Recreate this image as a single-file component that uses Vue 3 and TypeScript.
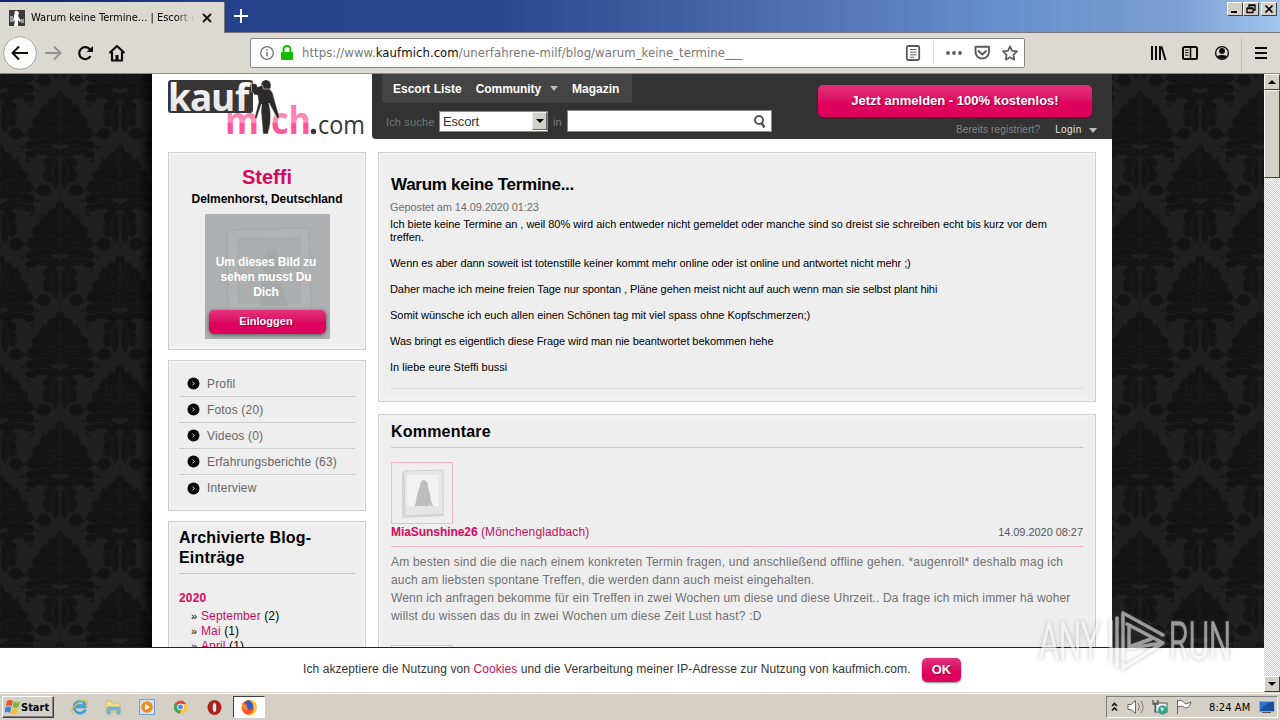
<script setup lang="ts">
interface MenuEntry {
  label: string
}

interface ArchiveEntry {
  month: string
  count: number
}

const profileMenu: MenuEntry[] = [
  { label: 'Profil' },
  { label: 'Fotos (20)' },
  { label: 'Videos (0)' },
  { label: 'Erfahrungsberichte (63)' },
  { label: 'Interview' },
]

const archive: ArchiveEntry[] = [
  { month: 'September', count: 2 },
  { month: 'Mai', count: 1 },
  { month: 'April', count: 1 },
]

const leaves: number[][] = [
  [0, 8, 5, 8], [-7, 14, 6, 7], [7, 14, 6, 7], [-13, 22, 8, 8], [13, 22, 8, 8], [0, 25, 9, 9],
  [-20, 31, 8, 7], [20, 31, 8, 7], [-9, 36, 11, 7], [9, 36, 11, 7], [-24, 42, 9, 7], [24, 42, 9, 7],
  [0, 46, 11, 8], [-14, 49, 9, 7], [14, 49, 9, 7], [-27, 54, 8, 5], [27, 54, 8, 5], [-17, 59, 12, 5],
  [17, 59, 12, 5], [-7, 62, 8, 5], [7, 62, 8, 5], [-29, 63, 6, 4], [29, 63, 6, 4],
  [-9, 72, 8, 6], [9, 72, 8, 6], [-12, 84, 5, 8], [12, 84, 5, 8], [-5, 84, 4, 14], [5, 84, 4, 14],
  [-16, 99, 7, 6], [16, 99, 7, 6],
]

const motifs: number[][] = [
  [60, 17], [60, -93], [0, 71], [120, 71], [0, -39], [120, -39],
]
</script>

<template>
  <div class="screen">
    <header class="chrome">
      <div class="titlebar">
        <div class="tab">
          <svg class="favicon" width="16" height="16" viewBox="0 0 16 16">
            <rect width="16" height="16" fill="#3a3a3a" />
            <path d="M1 6h3v6H1zM12 9h3v4h-3z" fill="#999" />
            <path d="M6 1q3-1 4 2l-1 3 3 5-1 1-2-2v6H5l1-6-2 2 1-6z" fill="#fff" />
          </svg>
          <span class="tab-title">Warum keine Termine... | Escort und</span>
          <svg class="tab-close" width="10" height="10" viewBox="0 0 10 10">
            <path d="M1 1l8 8M9 1L1 9" stroke="#111" stroke-width="1.8" />
          </svg>
        </div>
        <svg class="plus" width="14" height="14" viewBox="0 0 14 14">
          <path d="M7 0v14M0 7h14" stroke="#fff" stroke-width="1.9" />
        </svg>
        <div class="winbtns">
          <span class="wb"><svg width="14" height="12"><path d="M3 9h6" stroke="#000" stroke-width="2" /></svg></span>
          <span class="wb"><svg width="14" height="12"><path d="M5 4V2h6v5H9M5 2.5h6M3 5.5h6v4H3z M3 5h6" fill="none" stroke="#000" stroke-width="1.3" /></svg></span>
          <span class="wb last"><svg width="14" height="12"><path d="M3.500 2.500l7 7M10.500 2.500l-7 7" stroke="#000" stroke-width="1.7" /></svg></span>
        </div>
      </div>
      <div class="toolbar">
        <svg class="nav-icons" width="140" height="40" viewBox="0 33 140 40">
          <circle cx="20" cy="53" r="16.400" fill="#fbfbfa" stroke="#a7a49d" />
          <path d="M28 53H13M19 46.500L12.500 53L19 59.500" fill="none" stroke="#0c0c0d" stroke-width="2" stroke-linejoin="round" />
          <path d="M45 53h15M54 46.500L60.500 53L54 59.500" fill="none" stroke="#929090" stroke-width="2" stroke-linejoin="round" />
          <path d="M90.500 56a6 6 0 1 1-.5-6.500" fill="none" stroke="#0c0c0d" stroke-width="2.200" />
          <path d="M93 46v6h-6.500z" fill="#0c0c0d" />
          <path d="M109.500 53L117 46l7.500 7M112 52v8.500h10V52" fill="none" stroke="#0c0c0d" stroke-width="2.200" stroke-linejoin="round" />
          <path d="M115.500 55h3v5h-3z" fill="#0c0c0d" />
        </svg>
        <div class="urlbar">
          <svg width="46" height="28" viewBox="251 39 46 28">
            <circle cx="267" cy="53" r="6.300" fill="none" stroke="#737373" stroke-width="1.300" />
            <path d="M267 52v4.500M267 49.200v1.500" stroke="#737373" stroke-width="1.500" />
            <path d="M283.500 52v-2.500a3.500 3.500 0 0 1 7 0V52" fill="none" stroke="#12bc00" stroke-width="2" />
            <rect x="281" y="52" width="12" height="8" rx="1" fill="#12bc00" />
          </svg>
          <span class="url">https://www.<b>kaufmich.com</b>/unerfahrene-milf/blog/warum_keine_termine___</span>
          <svg class="url-icons" width="124" height="28" viewBox="900 39 124 28">
            <rect x="906.800" y="46" width="12.400" height="14" rx="1.500" fill="none" stroke="#5a5a5b" stroke-width="1.800" />
            <path d="M910 49.500h6.500M910 52.200h6.500M910 54.800h6.500M910 57.300h4" stroke="#5a5a5b" />
            <path d="M933.500 42v22" stroke="#d6d6d6" />
            <g fill="#5a5a5b"><circle cx="948" cy="53" r="1.900" /><circle cx="954" cy="53" r="1.900" /><circle cx="960" cy="53" r="1.900" /></g>
            <path d="M975.500 46.800h13.500v5a6.700 6.700 0 0 1-13.500 0z M978.500 51l3.800 3.500L986 51" fill="none" stroke="#5a5a5b" stroke-width="1.900" stroke-linejoin="round" stroke-linecap="round" />
            <path d="M1010 46.300l2.100 4.500 4.900.6-3.600 3.400.9 4.900-4.300-2.400-4.300 2.400.9-4.900-3.600-3.400 4.900-.6z" fill="none" stroke="#5a5a5b" stroke-width="1.700" stroke-linejoin="round" />
          </svg>
        </div>
        <svg class="tool-icons" width="130" height="40" viewBox="1146 33 130 40">
          <path d="M1152 46v14M1156 46v14M1160 46v14M1161.500 46.500l4 13.500" stroke="#0c0c0d" stroke-width="2" />
          <rect x="1183" y="47" width="14" height="12" rx="1.500" fill="none" stroke="#0c0c0d" stroke-width="2" />
          <path d="M1190.500 47v12" stroke="#0c0c0d" stroke-width="1.600" />
          <path d="M1185 50.200h3.500M1185 52.700h3.500M1185 55.200h3.500" stroke="#0c0c0d" />
          <circle cx="1222" cy="53" r="6.400" fill="none" stroke="#0c0c0d" stroke-width="1.300" />
          <circle cx="1222" cy="51" r="2.900" fill="#0c0c0d" />
          <path d="M1217 56q5-2 10 0-2 3-5 3t-5-3z" fill="#0c0c0d" />
          <path d="M1241.500 37v35" stroke="#c5c1ba" />
          <path d="M1255 48h12M1255 53h12M1255 58h12" stroke="#0c0c0d" stroke-width="2" />
        </svg>
      </div>
    </header>

    <div class="viewport">
      <svg class="damask" width="1264" height="573">
        <defs>
          <pattern id="damask" width="120" height="110" patternUnits="userSpaceOnUse">
            <rect width="120" height="110" fill="#202020" />
            <g v-for="(m, i) in motifs" :key="i" :transform="`translate(${m[0]} ${m[1]})`">
              <ellipse v-for="(l, j) in leaves" :key="j" :cx="l[0]" :cy="l[1]" :rx="l[2]" :ry="l[3]" fill="#141414" stroke="#1a1a1a" stroke-width=".8" stroke-dasharray="3 2" />
              <path d="M0 0v62M0 66v40M-4 20l4 6 4-6M-17 36q9-4 17 4 8-8 17-4M-24 48q14-4 24 6 10-10 24-6M-32 60q20-8 32 6 12-14 32-6M-3 68q-7 8-3 20 3 14-10 18M3 68q7 8 3 20-3 14 10 18" fill="none" stroke="#1c1c1c" />
              <path d="M-30 46l-4-3M30 46l4-3M-25 32l-3-4M25 32l3-4M-36 57l-3-2M36 57l3-2M-15 16l-3-3M15 16l3-3M-22 102l-3-4M22 102l3-4M-34 68l4 3M34 68l-4 3" stroke="#141414" stroke-width="2" />
            </g>
          </pattern>
          <linearGradient id="edgeL"><stop offset="0" stop-color="#000" stop-opacity="0" /><stop offset="1" stop-color="#000" stop-opacity=".65" /></linearGradient>
        </defs>
        <rect width="1264" height="573" fill="url(#damask)" />
        <rect x="138" width="14" height="573" fill="url(#edgeL)" />
      </svg>

      <div class="page">
        <div class="masthead">
          <svg class="logo" width="220" height="66" viewBox="152 74 220 66">
            <defs>
              <linearGradient id="pinkText" x1="0" y1="0" x2="0" y2="1">
                <stop offset="0" stop-color="#f06a9f" /><stop offset=".55" stop-color="#ff8fbd" /><stop offset=".6" stop-color="#ff4f96" /><stop offset="1" stop-color="#ff6aa6" />
              </linearGradient>
              <linearGradient id="silver" x1="0" y1="0" x2="0" y2="1"><stop offset="0" stop-color="#fff" /><stop offset="1" stop-color="#dedede" /></linearGradient>
            </defs>
            <rect x="168" y="80" width="85" height="33" rx="3" fill="#373536" />
            <text x="168 190 211 235" y="111" class="lg kauf" fill="url(#silver)">kauf</text>
            <text x="225" y="134" class="lg mich" textLength="34" lengthAdjust="spacingAndGlyphs" fill="url(#pinkText)">m</text>
            <text x="271" y="134" class="lg mich" textLength="40" lengthAdjust="spacingAndGlyphs" fill="url(#pinkText)">ch</text>
            <circle cx="313.500" cy="131.500" r="2.700" fill="#373536" />
            <text x="318" y="134" class="dotcom" textLength="47" lengthAdjust="spacingAndGlyphs" fill="#373536">com</text>
            <ellipse cx="266" cy="85.500" rx="4.800" ry="5.500" fill="#2c2a2b" />
            <path d="M251.500 83l5 1 1 3 5-2 1 4 6 0q4 3 4.500 9l5.500 19-2 2-8.500-16 1.500 9q1 11-2.500 22h-5l-2-22 .5-8-5 15-2-1 4-16-1-7-3 0-3-4z" fill="#2c2a2b" stroke="#fff" stroke-width=".5" />
          </svg>
          <div class="darkbar">
            <nav class="mainnav">
              <span class="n1">Escort Liste</span><span class="n2">Community</span>
              <i class="caret" /><span class="n3">Magazin</span>
            </nav>
            <div class="search">
              <span class="lbl">Ich suche</span>
              <div class="select"><span>Escort</span><i class="drop"><b /></i></div>
              <span class="lbl in">in</span>
              <div class="field">
                <svg width="14" height="16" viewBox="0 0 14 16"><circle cx="6" cy="6" r="4" fill="none" stroke="#555" stroke-width="2" /><path d="M8.500 9l3 4.500" stroke="#555" stroke-width="2.600" /></svg>
              </div>
            </div>
            <div class="signup">
              <div class="btn big">Jetzt anmelden - 100% kostenlos!</div>
              <div class="login"><span>Bereits registriert?</span><em>Login</em><i class="caret" /></div>
            </div>
          </div>
        </div>

        <div class="columns">
          <aside>
            <section class="panel profile">
              <h2>Steffi</h2>
              <p class="place">Delmenhorst, Deutschland</p>
              <div class="locked">
                <svg class="ghost" width="125" height="125" viewBox="0 0 125 125">
                  <path d="M20 18l82-6 4 100H22z" fill="#abafb0" />
                  <path d="M22 16l82-2 3 98H23z M33 25l62-1v65H34z" fill="#b0b3b4" fill-rule="evenodd" stroke="#a5a8aa" />
                  <path d="M54 92l4-36q0-21 7-21t9 8l3 30 6 16v3z" fill="#a4a8a9" />
                </svg>
                <div class="locked-content">
                  <p>Um dieses Bild zu<br>sehen musst Du<br>Dich</p>
                  <div class="btn small">Einloggen</div>
                </div>
              </div>
            </section>

            <section class="panel menu">
              <div v-for="entry in profileMenu" :key="entry.label" class="menu-row">
                <svg width="13" height="13" viewBox="0 0 13 13"><circle cx="6.500" cy="6.500" r="6" fill="#080808" /><path d="M5.500 4.800l2 1.700-2 1.700" fill="none" stroke="#ddd" /></svg>
                <span>{{ entry.label }}</span>
              </div>
            </section>

            <section class="panel archive">
              <h3>Archivierte Blog-<br>Einträge</h3>
              <div class="year">2020</div>
              <div v-for="item in archive" :key="item.month" class="month">
                <i>»</i><span>{{ item.month }}</span> ({{ item.count }})
              </div>
            </section>
          </aside>

          <main>
            <section class="panel article">
              <h1>Warum keine Termine...</h1>
              <div class="date">Gepostet am 14.09.2020 01:23</div>
              <div class="body">
                <p><span class="l1">Ich biete keine Termine an , weil 80% wird aich entweder nicht gemeldet oder manche sind so dreist sie schreiben echt bis kurz vor dem</span><br>treffen.</p>
                <p class="l2">Wenn es aber dann soweit ist totenstille keiner kommt mehr online oder ist online und antwortet nicht mehr ;)</p>
                <p class="l3">Daher mache ich meine freien Tage nur spontan , Pläne gehen meist nicht auf auch wenn man sie selbst plant hihi</p>
                <p class="l4">Somit wünsche ich euch allen einen Schönen tag mit viel spass ohne Kopfschmerzen;)</p>
                <p class="l5">Was bringt es eigentlich diese Frage wird man nie beantwortet bekommen hehe</p>
                <p class="l6">In liebe eure Steffi bussi</p>
              </div>
            </section>

            <section class="panel comments">
              <h3>Kommentare</h3>
              <div class="thumb">
                <svg width="60" height="60" viewBox="0 0 60 60">
                  <path d="M10 9l40-2 2 46-42 2z" fill="#d4d4d4" />
                  <path d="M12 8l39-1v44l-38 2z" fill="#e6e6e6" stroke="#d0d0d0" />
                  <path d="M15 12h32v31H15z" fill="#f2f2f2" />
                  <path d="M23 43l2-11q2-6 3-10 1-5 4-5 4 1 4 7l2 7 1 7 2 5h-3l-1-3v3z" fill="#bdbdbd" />
                </svg>
              </div>
              <div class="byline"><span class="who"><b>MiaSunshine26</b> <span class="city">(Mönchengladbach)</span></span><time>14.09.2020 08:27</time></div>
              <div class="comment">
                <p class="c1">Am besten sind die die nach einem konkreten Termin fragen, und anschließend offline gehen. *augenroll* deshalb mag ich</p>
                <p class="c2">auch am liebsten spontane Treffen, die werden dann auch meist eingehalten.</p>
                <p class="c3">Wenn ich anfragen bekomme für ein Treffen in zwei Wochen um diese und diese Uhrzeit.. Da frage ich mich immer hä woher</p>
                <p class="c4">willst du wissen das du in zwei Wochen um diese Zeit Lust hast? :D</p>
              </div>
              <div class="thumb next" />
            </section>
          </main>
        </div>
      </div>

      <div class="scrollbar">
        <span class="sbtn"><b class="up" /></span>
        <span class="sthumb" />
        <span class="strack" />
        <span class="sbtn"><b class="down" /></span>
      </div>

      <div class="cookies">
        <span class="ctext">Ich akzeptiere die Nutzung von <em>Cookies</em> und die Verarbeitung meiner IP-Adresse zur Nutzung von kaufmich.com.</span>
        <div class="btn ok">OK</div>
      </div>
    </div>

    <footer class="taskbar">
      <div class="start">
        <svg width="16" height="16" viewBox="0 0 16 16">
          <path d="M2 2q3-2 6 0L6.500 7.500q-3-2-6 0z" fill="#e8562a" /><path d="M9 2.500q3 2 6 0L13.500 8q-3 2-6 0z" fill="#7fb83a" />
          <path d="M.3 8.500q3-2 6 0L5 14q-3-2-5.500 0z" fill="#3f86d8" /><path d="M7.300 9q3 2 6 0L12 14.500q-3 2-6 0z" fill="#f5c02c" />
        </svg>
        <span>Start</span>
      </div>
      <svg class="apps" width="164" height="24" viewBox="68 695 164 24">
        <path d="M85.500 709.500a6 6 0 1 1 .2-4H76" fill="none" stroke="#3aa0dd" stroke-width="2.600" />
        <path d="M74 707.300h12.500" stroke="#3aa0dd" stroke-width="2" />
        <ellipse cx="79.500" cy="707" rx="9.500" ry="4" fill="none" stroke="#e7b93c" stroke-width="1.400" stroke-dasharray="26 14" stroke-dashoffset="-20" transform="rotate(-38 79.500 707)" />
        <path d="M106 701h5l1 2h8v9h-14z" fill="#f2dc85" stroke="#d1b24e" stroke-width=".7" />
        <path d="M107 714v-5q0-2 2-2h9q2 0 2 2v5h-3v-4h-7v4z" fill="#6fb8e6" stroke="#4d96c8" stroke-width=".6" />
        <rect x="139.500" y="699.500" width="15" height="15" fill="#cfe3f4" stroke="#6f9fcb" />
        <circle cx="147" cy="707" r="5.800" fill="#f08a1c" /><path d="M145 703.800l5 3.200-5 3.200z" fill="#fff" />
        <circle cx="180.500" cy="707" r="6.500" fill="#e2493b" />
        <path d="M175 703.500L180.500 707l-1.500 6.500a6.500 6.500 0 0 1-4-10z" fill="#36a853" />
        <path d="M180.500 704h6a6.500 6.500 0 0 1-7 9.400l4-6.400z" fill="#fbca35" />
        <circle cx="180.500" cy="707" r="3" fill="#4a87ee" stroke="#fff" />
        <ellipse cx="214.500" cy="707.500" rx="7" ry="7.500" fill="#b0201c" /><ellipse cx="214.500" cy="707.500" rx="2.200" ry="5" fill="#f4e9e4" stroke="#70100e" stroke-width=".7" />
      </svg>
      <div class="active">
        <svg width="18" height="18" viewBox="0 0 18 18">
          <circle cx="9" cy="9.500" r="7.500" fill="#f9572a" /><path d="M9 2q8 0 7.500 8A7 7 0 0 1 8 17q8-4 5-9z" fill="#ffc52e" />
          <path d="M8 2q-5 2-2 6 0 4 4 4 4-1 3-5-1-4-5-5z" fill="#3b55c4" /><path d="M2 5q2 1 5 2-1 3 2 4-5 2-7-2z" fill="#fb8a24" />
        </svg>
      </div>
      <div class="tray">
        <svg width="88" height="20" viewBox="1108 697 88 20">
          <path d="M1113 706l2.500-2.500L1118 706M1113 710.500l2.500-2.500 2.500 2.500" fill="none" stroke="#111" stroke-width="1.600" />
          <path d="M1129 704.500h3l4.500-4v13l-4.500-4h-3z" fill="#fff" stroke="#666" />
          <path d="M1139 703q3 4 0 8M1142 701q4 6 0 12" fill="none" stroke="#777" />
          <rect x="1156" y="703" width="12" height="9" fill="#e6eef2" stroke="#555" /><circle cx="1163.500" cy="710" r="4.500" fill="#2f9f90" /><path d="M1161 708q3-2 4 1l-2 3z" fill="#b8e4d0" />
          <path d="M1154 700v4h5v-4M1156.500 704v8" fill="none" stroke="#555" stroke-width="1.300" />
          <path d="M1178.500 700v14M1178.500 701q4-2 6 1t7.500 0q-1 5-4 6-3 0-4-1.500-2-1-5.500.5z" fill="#fff" stroke="#666" />
        </svg>
        <span>8:24 AM</span>
        <svg class="desk" width="16" height="14" viewBox="0 0 16 14"><rect x=".5" y="1.500" width="14.500" height="10" fill="#2e6fc9" stroke="#8fa7c6" /><path d="M1 11q5-8 14-9v9z" fill="#1a4fa3" /><path d="M3 12.500h9" stroke="#555" /></svg>
      </div>
    </footer>

    <svg class="watermark" width="204" height="70" viewBox="1034 606 204 70">
      <g class="wm">
        <text x="1039" y="659" textLength="61" lengthAdjust="spacingAndGlyphs">ANY</text>
        <text x="1169" y="659" textLength="62" lengthAdjust="spacingAndGlyphs">RUN</text>
        <path d="M1123 613v46M1123 613l40 22M1127 624l36 19M1163 643l-40 25M1163 643l-33 5M1123 663v6M1117 618v48M1111 621v40M1129 625v22l22 -8" />
      </g>
    </svg>
  </div>
</template>

<style>
html, body { margin: 0; overflow: hidden; }
</style>

<style scoped>
* { box-sizing: border-box; }
.screen { position: relative; width: 1280px; height: 720px; overflow: hidden; display: flex; flex-direction: column; font-family: "Liberation Sans", Arial, sans-serif; font-size: 12px; color: #000; white-space: nowrap; }
h1, h2, h3, p { margin: 0; }
em, i { font-style: normal; }
svg { display: block; flex: none; }

.chrome { height: 74px; flex: none; }
.titlebar { height: 33px; display: flex; background: linear-gradient(90deg, #0b256b 0, #25418c 224px, #2b4792 500px, #4e6dae 780px, #6590cc 1000px, #7ba0d2 1180px, #a2c6f0 1280px); border-bottom: 1px solid #77777a; }
.tab { width: 225px; height: 31px; margin-top: 2px; background: #dcd9d3; display: flex; align-items: center; padding-left: 9px; border-right: 1px solid #777; }
.tab-title { font: 11px/16px "DejaVu Sans Condensed", "Noto Sans", sans-serif; width: 164px; margin-left: 6px; overflow: hidden; letter-spacing: 0; mask-image: linear-gradient(90deg, #000 145px, transparent 164px); }
.tab-close { margin-left: 7px; }
.plus { margin: 9px 0 0 9px; }
.winbtns { margin: 2px 3px 0 auto; display: flex; height: 14px; }
.wb { width: 16px; height: 14px; background: #d4d0c8; border: 1px solid; border-color: #fff #404040 #404040 #fff; overflow: hidden; }
.wb.last { margin-left: 2px; }
.toolbar { height: 41px; background: #dcd9d3; border-bottom: 1px solid #8d8b86; display: flex; }
.urlbar { width: 775px; height: 30px; margin: 5px 0 0 110px; background: #fff; border: 1px solid #89878a; border-radius: 2px; display: flex; align-items: center; }
.url { font: 13px/18px "DejaVu Sans Condensed", "Noto Sans", sans-serif; margin-left: 5px; color: #777; letter-spacing: .05px; }
.url b { font-weight: 400; color: #0c0c0d; }
.url-icons { margin-left: auto; }
.tool-icons { margin-left: auto; margin-right: 4px; }

.viewport { position: relative; height: 618px; flex: none; background: #fff; overflow: hidden; }
.damask { position: absolute; left: 0; top: 0; }
.page { position: relative; width: 960px; height: 573px; margin-left: 152px; background: #fff; overflow: hidden; }
.masthead { display: flex; height: 65px; }
.lg { font-family: "Open Sans", "Noto Sans", sans-serif; font-weight: 700; }
.kauf { font-size: 37px; }
.mich { font-size: 38px; }
.dotcom { font-family: "Open Sans", "Noto Sans", sans-serif; font-size: 26px; }
.darkbar { width: 740px; height: 65px; background: #333; border-bottom-left-radius: 4px; display: grid; grid-template-columns: 446px 274px; grid-template-rows: 29px 36px; position: relative; }
.mainnav { width: 250px; margin-left: 10px; background: #444; display: flex; align-items: center; padding-left: 11px; color: #fff; font-weight: 700; font-size: 12px; border-radius: 0 0 3px 3px; }
.n2 { margin-left: 14px; letter-spacing: -.08px; }
.n3 { margin-left: 14px; }
.caret { border: 4px solid transparent; border-top: 5px solid #bbb; border-bottom: 0; margin-left: 9px; }
.search { grid-row: 2; display: flex; padding-left: 14px; color: #777; }
.lbl { line-height: 38px; width: 53px; font-size: 11px; letter-spacing: .15px; }
.select { width: 109px; height: 21px; margin-top: 8px; background: #fff; border: 1px solid #888; color: #333; display: flex; justify-content: space-between; padding-left: 3px; font: 13px/20px "Liberation Sans", sans-serif; letter-spacing: -.15px; }
.drop { width: 15px; height: 18px; background: #d4d0c8; border: 1px solid; border-color: #eee #666 #666 #eee; display: flex; align-items: center; justify-content: center; }
.drop b, .down { border: 4px solid transparent; border-top-color: #000; border-bottom: 0; }
.up { border: 4px solid transparent; border-bottom-color: #000; border-top: 0; }
.lbl.in { width: 14px; margin-left: 5px; }
.field { width: 205px; height: 22px; margin-top: 7px; border: 1px solid #888; background: #fff; display: flex; justify-content: flex-end; padding: 3px 4px; }
.signup { grid-row: 1 / 3; grid-column: 2; padding-top: 11px; }
.btn { background: linear-gradient(#e6317c, #d90f62 50%, #e2005f 55%, #dc005c); color: #fff; font-weight: 700; text-align: center; border-radius: 5px; text-shadow: 1px 1px 1px #8a0040; }
.big { height: 32px; line-height: 31px; font-size: 13px; box-shadow: 0 1px 2px #700030; }
.login { display: flex; align-items: center; height: 22px; margin-left: 138px; font-size: 10px; letter-spacing: .15px; color: #858585; padding-top: 2px; }
.login em { color: #e6e6e6; margin-left: 15px; letter-spacing: .4px; }
.login .caret { margin-left: 7px; margin-top: 3px; }

.columns { display: flex; padding: 13px 16px 0; gap: 12px; }
aside { width: 198px; display: flex; flex-direction: column; gap: 10px; }
main { width: 718px; display: flex; flex-direction: column; gap: 12px; }
.panel { background: #eee; border: 1px solid #ccc; box-shadow: inset 0 0 0 2px #f3f3f3; }
.profile { height: 198px; display: flex; flex-direction: column; align-items: center; padding-top: 12px; }
.profile h2 { font-size: 20px; line-height: 24px; color: #d6085f; }
.place { font-weight: 700; line-height: 20px; letter-spacing: -.05px; }
.locked { position: relative; width: 125px; height: 125px; background: #adb0b1; margin-top: 5px; color: #fff; font-weight: 700; }
.ghost { position: absolute; left: 0; top: 0; }
.locked-content { position: relative; padding: 41px 4px 0; text-align: center; line-height: 15px; letter-spacing: -.13px; }
.locked-content p { margin-left: -2px; }
.btn.small { height: 24px; line-height: 23px; font-size: 11px; letter-spacing: .02px; padding-right: 2px; margin: 10px 0 0; box-shadow: 0 1px 4px #555; }
.menu { height: 151px; padding: 10px 10px 0; }
.menu-row { height: 26px; display: flex; align-items: center; gap: 7px; padding-left: 8px; border-bottom: 1px solid #ccc; color: #666; letter-spacing: .17px; }
.menu-row:last-child { border: 0; }
.archive { height: 180px; padding: 6px 10px; }
h3 { font-size: 16px; line-height: 20px; letter-spacing: .2px; }
.archive h3 { border-bottom: 1px solid #f3b0c4; height: 46px; }
.year { color: #d6085f; font-weight: 700; line-height: 18px; letter-spacing: .2px; margin-top: 15px; }
.month { line-height: 15px; padding-left: 12px; letter-spacing: .12px; }
.month:nth-of-type(2) { margin-top: 2px; }
.month i { display: inline-block; width: 10px; font-size: 11px; }
.month span { color: #c50e5b; }

.article { height: 250px; padding: 21px 11px 0; font-size: 11px; }
h1 { font-size: 17px; line-height: 21px; padding-left: 1px; letter-spacing: -.27px; }
.date { line-height: 15px; margin-top: 5px; color: #6f6f6f; letter-spacing: -.1px; }
.body { line-height: 13px; margin-top: 3px; height: 171px; border-bottom: 1px solid #ddd; }
.body p { margin-bottom: 13px; }
.l1 { letter-spacing: -.034px; }
.l2 { letter-spacing: -.073px; }
.l3 { letter-spacing: -.081px; }
.l4 { letter-spacing: -.028px; }
.l5 { letter-spacing: -.067px; }
.comments { height: 300px; padding: 7px 12px 0; }
.comments h3 { height: 26px; border-bottom: 1px solid #f3b0c4; }
.thumb { width: 62px; height: 62px; border: 1px solid #f3b4c8; margin-top: 14px; }
.byline { display: flex; justify-content: space-between; height: 23px; line-height: 17px; border-bottom: 1px solid #f0afc5; color: #c50e5b; }
.byline b { color: #d6085f; letter-spacing: -.06px; }
.city { letter-spacing: .14px; }
.byline time { color: #555; font-size: 11px; letter-spacing: -.05px; }
.comment { color: #707070; line-height: 18px; margin-top: 6px; }
.c1 { letter-spacing: .2px; }
.c2 { letter-spacing: .19px; }
.c3 { letter-spacing: .145px; }
.c4 { letter-spacing: .18px; }
.thumb.next { margin-top: 20px; }

.scrollbar { position: absolute; right: 0; top: 0; width: 16px; height: 618px; display: flex; flex-direction: column; background: #eae8e3; }
.sbtn { height: 16px; background: #d4d0c8; border: 1px solid; border-color: #fff #404040 #404040 #fff; display: flex; align-items: center; justify-content: center; }
.sthumb { height: 88px; background: #d4d0c8; border: 1px solid; border-color: #fff #404040 #404040 #fff; }
.strack { flex: 1; background: repeating-conic-gradient(#d4d0c8 0 25%, #fff 0 50%) 0 0 / 2px 2px; }
.cookies { position: absolute; left: 0; bottom: 0; width: 1264px; height: 45px; border-top: 1px solid #222; background: #fff; display: flex; padding-left: 303px; color: #333; }
.ctext { line-height: 42px; width: 619px; letter-spacing: .074px; }
.ctext em { color: #c50e5b; }
.ok { width: 39px; height: 24px; line-height: 24px; margin-top: 10px; font-size: 13px; box-shadow: 0 1px 2px #888; }

.taskbar { height: 28px; background: #d4d0c8; border-top: 1px solid #d4d0c8; box-shadow: inset 0 1px #fff; display: flex; flex: none; }
.start { width: 52px; height: 22px; margin: 3px 0 0 2px; border: 1px solid; border-color: #fff #404040 #404040 #fff; box-shadow: inset -1px -1px #808080; display: flex; align-items: center; padding-left: 2px; font: 700 11px "DejaVu Sans Condensed", sans-serif; }
.start span { letter-spacing: 0; }
.apps { margin: 2px 0 0 14px; }
.active { width: 32px; height: 22px; margin: 3px 0 0 1px; background: #fff; border: 1px solid; border-color: #404040 #fff #fff #404040; padding: 1px 6px; }
.tray { width: 172px; height: 22px; margin: 3px 2px 0 auto; border: 1px solid; border-color: #808080 #fff #fff #808080; display: flex; align-items: center; }
.tray span { font: 11px "DejaVu Sans Condensed", sans-serif; width: 50px; margin-left: 14px; letter-spacing: .1px; }

.watermark { position: absolute; left: 1034px; top: 606px; filter: drop-shadow(0 0 2px rgba(90, 90, 90, .6)); opacity: .6; }
.wm text { font: 300 51px Roboto, sans-serif; fill: #f4f4f4; stroke: #f4f4f4; stroke-width: 1.6; }
.wm path { fill: none; stroke: #f4f4f4; stroke-width: 3.500; stroke-linejoin: round; stroke-linecap: round; }
</style>
